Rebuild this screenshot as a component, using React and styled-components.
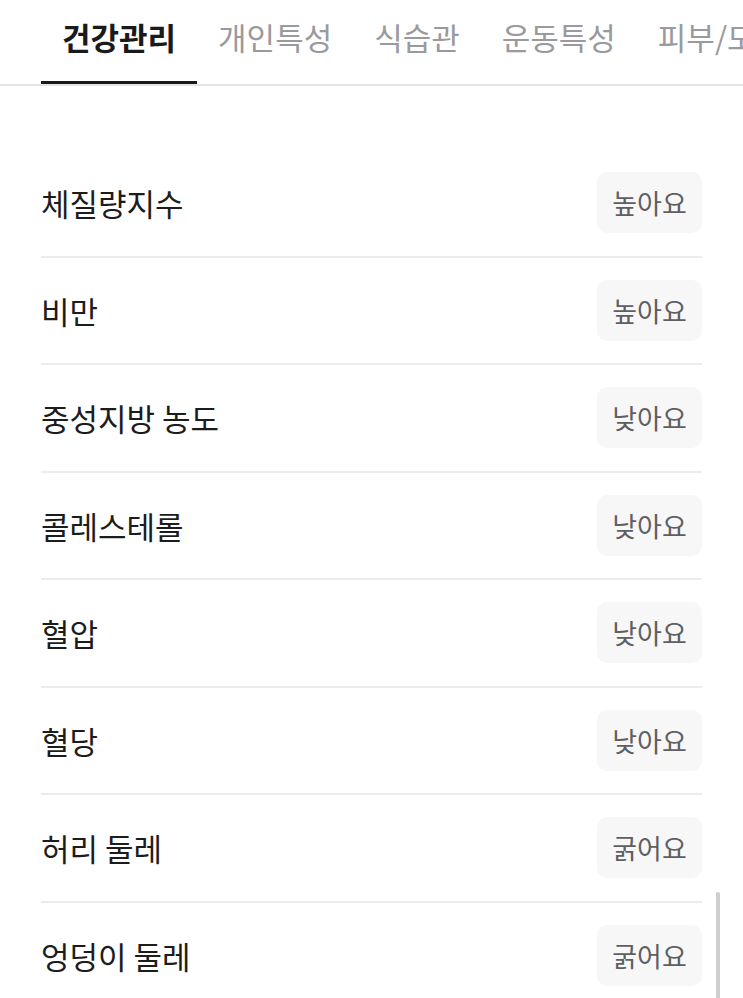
import React from 'react';
import styled, { createGlobalStyle } from 'styled-components';

const GlobalStyle = createGlobalStyle`
  * { box-sizing: border-box; }
  html, body {
    margin: 0;
    padding: 0;
    background: #ffffff;
    font-family: "Noto Sans CJK KR", "Noto Sans", sans-serif;
    overflow: hidden;
  }
`;

const Page = styled.div`
  position: relative;
  width: 743px;
  height: 998px;
  overflow: hidden;
  background: #fff;
`;

const TabBar = styled.nav`
  display: flex;
  padding: 0 0 0 41px;
  border-bottom: 2px solid #e3e3e8;
  white-space: nowrap;
  overflow: hidden;
`;

const Tab = styled.div`
  position: relative;
  flex-shrink: 0;
  padding: 0 21px;
  height: 84px;
  line-height: 74px;
  font-size: 31px;
  font-weight: ${({ $active }) => ($active ? 700 : 400)};
  color: ${({ $active }) => ($active ? '#1a1a1a' : '#9a9a9e')};

  &::after {
    content: '';
    display: ${({ $active }) => ($active ? 'block' : 'none')};
    position: absolute;
    left: 0;
    right: 0;
    bottom: -1px;
    height: 4px;
    background: #1a1a1a;
  }
`;

const List = styled.ul`
  list-style: none;
  margin: 0;
  padding: 64px 41px 0;
`;

const Row = styled.li`
  display: flex;
  align-items: center;
  justify-content: space-between;
  height: 107.5px;
  border-bottom: 2px solid #ececee;
`;

const Label = styled.span`
  font-size: 31px;
  font-weight: 400;
  color: #1c1c1c;
`;

const Badge = styled.span`
  display: flex;
  align-items: center;
  justify-content: center;
  width: 105px;
  height: 61px;
  border-radius: 10px;
  background: #f7f7f8;
  font-size: 27px;
  color: #5f5f63;
`;

const ScrollThumb = styled.div`
  position: absolute;
  right: 23px;
  top: 892px;
  width: 4px;
  height: 110px;
  border-radius: 2px;
  background: #cfcfd2;
`;

const tabs = ['건강관리', '개인특성', '식습관', '운동특성', '피부/모발'];

const items = [
  { name: '체질량지수', value: '높아요' },
  { name: '비만', value: '높아요' },
  { name: '중성지방 농도', value: '낮아요' },
  { name: '콜레스테롤', value: '낮아요' },
  { name: '혈압', value: '낮아요' },
  { name: '혈당', value: '낮아요' },
  { name: '허리 둘레', value: '굵어요' },
  { name: '엉덩이 둘레', value: '굵어요' },
];

export default function App() {
  return (
    <>
      <GlobalStyle />
      <Page>
        <TabBar>
          {tabs.map((t, i) => (
            <Tab key={t} $active={i === 0}>
              {t}
            </Tab>
          ))}
        </TabBar>
        <List>
          {items.map(({ name, value }) => (
            <Row key={name}>
              <Label>{name}</Label>
              <Badge>{value}</Badge>
            </Row>
          ))}
        </List>
        <ScrollThumb />
      </Page>
    </>
  );
}
